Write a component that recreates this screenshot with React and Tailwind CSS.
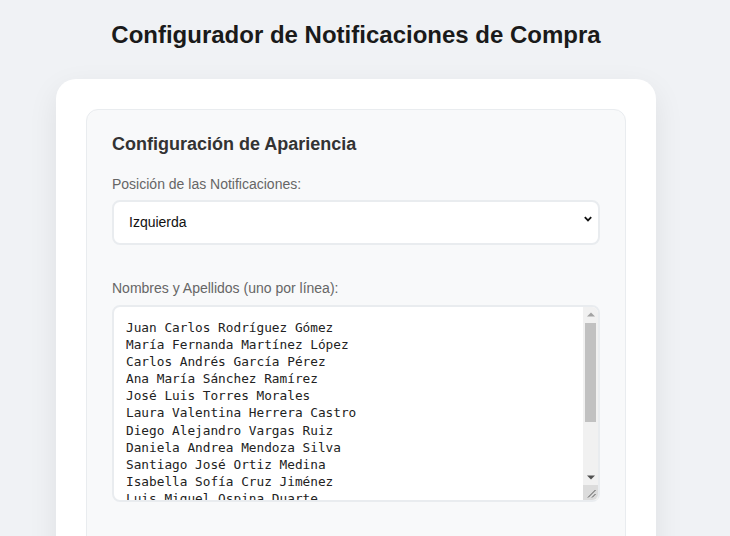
import React from "react";

const names = [
  "Juan Carlos Rodríguez Gómez",
  "María Fernanda Martínez López",
  "Carlos Andrés García Pérez",
  "Ana María Sánchez Ramírez",
  "José Luis Torres Morales",
  "Laura Valentina Herrera Castro",
  "Diego Alejandro Vargas Ruiz",
  "Daniela Andrea Mendoza Silva",
  "Santiago José Ortiz Medina",
  "Isabella Sofía Cruz Jiménez",
  "Luis Miguel Ospina Duarte",
  "Valentina Restrepo Gómez",
  "Andrés Felipe Rojas Castillo",
  "Camila Alejandra Moreno Díaz",
  "Sebastián Gutiérrez Álvarez",
  "Paula Andrea Romero Suárez",
].join("\n");

export default function App() {
  return (
    <div
      className="h-[536px] overflow-hidden bg-[#f0f2f5]"
      style={{ fontFamily: '"Liberation Sans", Arial, sans-serif' }}
    >
      <div className="w-[600px] ml-[56px] pt-[21px]">
        <h1 className="text-center text-[24px] leading-[28px] font-bold text-[#1a1a1a] mb-[30px]">
          Configurador de Notificaciones de Compra
        </h1>
        <div className="bg-white rounded-[20px] p-[30px] shadow-[0_10px_30px_rgba(0,0,0,0.08)]">
          <div className="bg-[#f8f9fa] border border-[#e9ecef] rounded-[12px] px-[25px] pt-[24px] pb-[40px]">
            <h2 className="text-[18px] leading-[21px] font-bold text-[#333] mb-[21px]">
              Configuración de Apariencia
            </h2>
            <label className="block text-[14px] leading-[17px] text-[#666] mb-[7px]">
              Posición de las Notificaciones:
            </label>
            <div className="relative">
              <select
                defaultValue="left"
                className="block w-full h-[45px] appearance-none border-2 border-[#e9ecef] rounded-[8px] bg-white pl-[15px] pr-[30px] text-[14px] text-[#111] outline-none"
              >
                <option value="left">Izquierda</option>
                <option value="right">Derecha</option>
              </select>
              <svg
                className="absolute left-[472px] top-[15px] pointer-events-none"
                width="8"
                height="8"
                viewBox="0 0 8 8"
              >
                <path d="M0.8 2.2 L4 5.4 L7.2 2.2" fill="none" stroke="#111" strokeWidth="1.8" />
              </svg>
            </div>
            <label className="block mt-[35px] text-[14px] leading-[17px] text-[#666] mb-[8px]">
              Nombres y Apellidos (uno por línea):
            </label>
            <div className="relative">
              <textarea
                defaultValue={names}
                className="block w-full h-[197px] resize-none overflow-hidden border-2 border-[#e9ecef] rounded-[8px] bg-white pl-[12px] pr-[27px] py-[12px] text-[12.75px] leading-[17.1px] text-[#222] outline-none"
                style={{ fontFamily: '"DejaVu Sans Mono", "Liberation Mono", monospace' }}
              />
              {/* simulated native scrollbar */}
              <div className="absolute right-[2px] top-[2px] bottom-[2px] w-[15px] flex flex-col bg-[#f1f1f1] rounded-tr-[6px] pointer-events-none">
                <div className="h-[15px] flex items-center justify-center">
                  <svg width="8" height="5" viewBox="0 0 8 5">
                    <path d="M0 4.5 L4 0.5 L8 4.5 Z" fill="#a3a3a3" />
                  </svg>
                </div>
                <div className="flex-1 px-[2px] pt-[1px]">
                  <div className="h-[99px] bg-[#c1c1c1]" />
                </div>
                <div className="h-[15px] flex items-center justify-center">
                  <svg width="8" height="5" viewBox="0 0 8 5">
                    <path d="M0 0.5 L8 0.5 L4 4.5 Z" fill="#505050" />
                  </svg>
                </div>
                <div className="h-[15px] bg-[#dcdcdc] rounded-br-[6px] relative">
                  <svg className="absolute right-[2px] bottom-[2px]" width="9" height="9" viewBox="0 0 9 9">
                    <path d="M8.5 1 L1 8.5 M8.5 5 L5 8.5" stroke="#555" strokeWidth="1" fill="none" />
                  </svg>
                </div>
              </div>
            </div>
            <div className="h-[60px]" />
          </div>
        </div>
      </div>
    </div>
  );
}
